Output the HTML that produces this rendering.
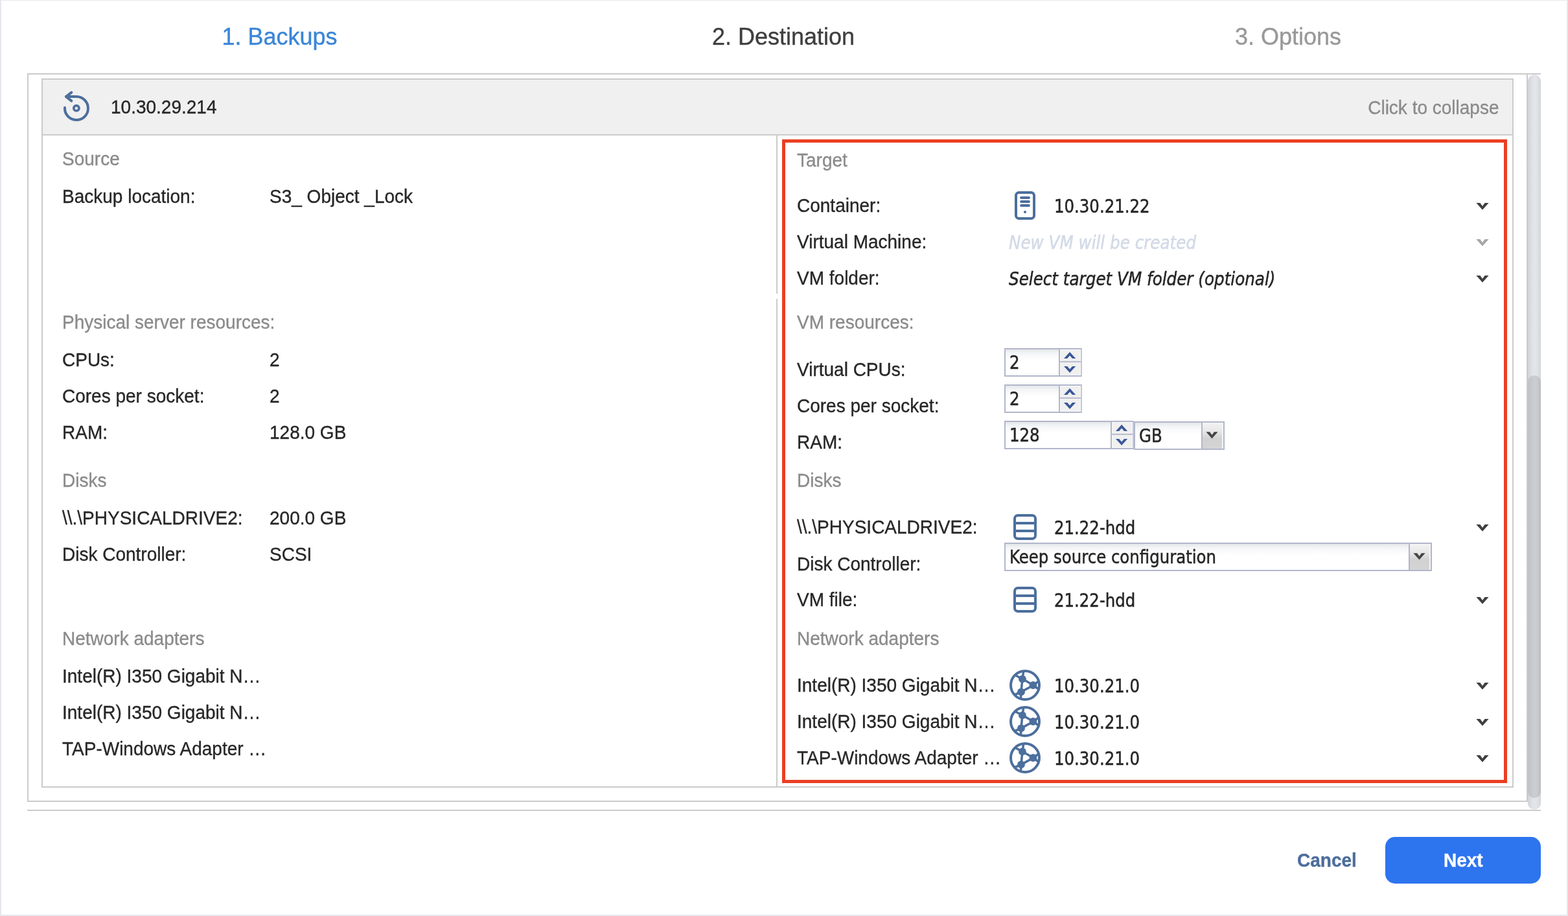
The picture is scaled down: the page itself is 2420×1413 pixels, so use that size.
<!DOCTYPE html>
<html lang="en"><head><meta charset="utf-8"><title>Recovery wizard - Destination</title>
<style>
*{box-sizing:border-box;margin:0;padding:0}
html,body{width:2420px;height:1413px;overflow:hidden;background:#fff}
body{position:relative;font-family:"Liberation Sans",Arial,Helvetica,sans-serif;font-size:28px;color:#272727}
#app{position:absolute;left:0;top:0;width:2420px;height:1413px;will-change:transform}
.abs{position:absolute}
.t{position:absolute;white-space:nowrap;line-height:32px;height:32px;transform-origin:0 0;transform:scaleY(1.03);-webkit-text-stroke:.35px currentColor}
.g{color:#8b8b8b}
.tv{position:absolute;white-space:nowrap;line-height:34px;height:34px;font-family:"DejaVu Sans",Verdana,Tahoma,sans-serif;font-size:28px;transform-origin:0 50%;transform:scaleX(.872);color:#262626;-webkit-text-stroke:.55px currentColor}
.tv.i{font-style:italic;transform:scaleX(.88)}
.title{position:absolute;top:35.8px;width:778px;text-align:center;font-size:36px;line-height:42px;white-space:nowrap;transform-origin:0 0;transform:scaleY(1.015);-webkit-text-stroke:.4px currentColor}
.line{position:absolute;background:#cbcbcb}
.fld{position:absolute;height:44px;border:2px solid #b2b6cb;background:linear-gradient(#e3e6e9 0,#f1f3f4 5px,#fbfbfc 12px,#fff 18px)}
.spin{position:absolute;top:0;right:0;bottom:0;width:34px;border-left:2px solid #b2b6cb;background:#f0f0f0;box-shadow:inset 0 0 0 1px #fafafa}
.spin i{position:absolute;left:0;right:0;top:18px;height:2px;background:#b9bdd0}
.trig{position:absolute;top:0;right:0;bottom:0;width:34px;border-left:2px solid #b2b6cb;background:linear-gradient(#f3f3f3 0,#e8e8e8 32%,#d1d1d1 62%,#d4d4d4 100%);box-shadow:inset -2px 1px 0 0 #f4f4f4}
svg{position:absolute;overflow:visible}
.btn{position:absolute;left:2138px;top:1291px;width:240px;height:72px;border-radius:15px;background:#2d74ef}
</style></head>
<body>
<div id="app">
<div class="abs" style="left:0;top:0;width:2420px;height:1413px;border:2px solid #e6e8ed;border-width:1px 2px 2px 2px"></div>
<div class="title" style="left:42.5px;color:#3b86d8">1. Backups</div>
<div class="title" style="left:820px;color:#3f3f3f">2. Destination</div>
<div class="title" style="left:1599px;color:#999">3. Options</div>
<div class="line" style="left:42px;top:113px;width:2336px;height:2px"></div>
<div class="line" style="left:42px;top:113px;width:2px;height:1124px"></div>
<div class="line" style="left:2356px;top:113px;width:2px;height:1124px"></div>
<div class="line" style="left:42px;top:1235px;width:2316px;height:2px"></div>
<div class="line" style="left:42px;top:1249px;width:2336px;height:2px"></div>
<div class="abs" style="left:64px;top:121px;width:2272px;height:1094px;border:2px solid #cbcbcb"></div>
<div class="abs" style="left:66px;top:123px;width:2268px;height:84px;background:#f0f0f0"></div>
<div class="line" style="left:66px;top:207px;width:2268px;height:2px"></div>
<div class="line" style="left:1198px;top:209px;width:2px;height:244px"></div>
<div class="line" style="left:1198px;top:461px;width:2px;height:752px"></div>
<div class="abs" style="left:1207px;top:215px;width:1119px;height:993px;border:5px solid #ea3f23"></div>
<div class="abs" style="left:2358px;top:115px;width:20px;height:1134px;border-radius:10px;background:linear-gradient(90deg,#d0d2d7 0,#dcdee3 25%,#e4e6ea 50%,#dfe1e6 75%,#d2d4d9 100%)"></div>
<div class="abs" style="left:2358px;top:578.5px;width:20px;height:652.5px;border-radius:10px;background:linear-gradient(90deg,#bec0c5 0,#c7c9cd 30%,#cdced2 55%,#c6c8cc 80%,#b9bbc0 100%)"></div>
<svg style="left:96px;top:140px" width="44" height="48" viewBox="0 0 44 48"><g fill="none" stroke="#4c6f9d" stroke-width="4" stroke-linecap="round" stroke-linejoin="round"><path d="M6 9.1H22A18 18 0 1 1 4 26"/><path d="M14.3 2.6L6 9.1L14.3 15.6"/><circle cx="21.9" cy="26.9" r="4.1" stroke-width="3.7"/></g></svg>
<div class="t" style="left:171px;top:149.1px">10.30.29.214</div>
<div class="t g" style="right:106.5px;top:149.6px">Click to collapse</div>
<div class="t g" style="left:96px;top:228.9px">Source</div>
<div class="t" style="left:96px;top:286.9px">Backup location:</div>
<div class="t" style="left:416px;top:286.9px">S3_ Object _Lock</div>
<div class="t g" style="left:96px;top:480.9px">Physical server resources:</div>
<div class="t" style="left:96px;top:539px">CPUs:</div>
<div class="t" style="left:416px;top:539px">2</div>
<div class="t" style="left:96px;top:595px">Cores per socket:</div>
<div class="t" style="left:416px;top:595px">2</div>
<div class="t" style="left:96px;top:651px">RAM:</div>
<div class="t" style="left:416px;top:651px">128.0 GB</div>
<div class="t g" style="left:96px;top:725px">Disks</div>
<div class="t" style="left:96px;top:783px">\\.\PHYSICALDRIVE2:</div>
<div class="t" style="left:416px;top:783px">200.0 GB</div>
<div class="t" style="left:96px;top:839px">Disk Controller:</div>
<div class="t" style="left:416px;top:839px">SCSI</div>
<div class="t g" style="left:96px;top:969px">Network adapters</div>
<div class="t" style="left:96px;top:1027px">Intel(R) I350 Gigabit N…</div>
<div class="t" style="left:96px;top:1083px">Intel(R) I350 Gigabit N…</div>
<div class="t" style="left:96px;top:1139px">TAP-Windows Adapter …</div>
<div class="t g" style="left:1230px;top:230.9px">Target</div>
<div class="t" style="left:1230px;top:301.1px">Container:</div>
<div class="t" style="left:1230px;top:357.1px">Virtual Machine:</div>
<div class="t" style="left:1230px;top:413.1px">VM folder:</div>
<div class="t g" style="left:1230px;top:481.1px">VM resources:</div>
<div class="t" style="left:1230px;top:554.1px">Virtual CPUs:</div>
<div class="t" style="left:1230px;top:610.2px">Cores per socket:</div>
<div class="t" style="left:1230px;top:666.2px">RAM:</div>
<div class="t g" style="left:1230px;top:725px">Disks</div>
<div class="t" style="left:1230px;top:797px">\\.\PHYSICALDRIVE2:</div>
<div class="t" style="left:1230px;top:854px">Disk Controller:</div>
<div class="t" style="left:1230px;top:909px">VM file:</div>
<div class="t g" style="left:1230px;top:969px">Network adapters</div>
<div class="t" style="left:1230px;top:1041px">Intel(R) I350 Gigabit N…</div>
<div class="t" style="left:1230px;top:1097px">Intel(R) I350 Gigabit N…</div>
<div class="t" style="left:1230px;top:1153px">TAP-Windows Adapter …</div>
<svg style="left:1564px;top:294px" width="36" height="46" viewBox="0 0 36 46"><rect x="4" y="3" width="28" height="40" rx="4.5" fill="none" stroke="#4c6f9d" stroke-width="4"/><path d="M12 11h12M12 17h12M12 23h12" fill="none" stroke="#4c6f9d" stroke-width="3.8" stroke-linecap="round"/><circle cx="18" cy="33" r="2.1" fill="#4c6f9d"/></svg>
<div class="tv" style="left:1627px;top:302px">10.30.21.22</div>
<svg style="left:2278px;top:313.1px" width="20" height="12" viewBox="0 0 20 12"><polygon points="0.4,0 6.4,0 10,5.1 13.6,0 19.6,0 10,10.8" fill="#3f3f3f"/></svg>
<div class="tv i" style="left:1557px;top:358px;color:#d2dae7">New VM will be created</div>
<svg style="left:2278px;top:369.1px" width="20" height="12" viewBox="0 0 20 12"><polygon points="0.4,0 6.4,0 10,5.1 13.6,0 19.6,0 10,10.8" fill="#a6a6a6"/></svg>
<div class="tv i" style="left:1557px;top:414px">Select target VM folder (optional)</div>
<svg style="left:2278px;top:425.1px" width="20" height="12" viewBox="0 0 20 12"><polygon points="0.4,0 6.4,0 10,5.1 13.6,0 19.6,0 10,10.8" fill="#3f3f3f"/></svg>
<div class="fld" style="left:1550px;top:537px;width:120px;border-right-color:#c2c6d8"><div class="spin"><i></i><svg style="left:5.8px;top:4px" width="19" height="10" viewBox="0 0 19 10"><polygon points="0,10 9.1,0 18.2,10 13,10 9.1,5.6 5.2,10" fill="#3a5799"/></svg><svg style="left:5.8px;top:25.8px" width="19" height="10" viewBox="0 0 19 10"><polygon points="0,0 5.2,0 9.1,4.4 13,0 18.2,0 9.1,10" fill="#3a5799"/></svg></div></div>
<div class="tv" style="left:1558px;top:543px">2</div>
<div class="fld" style="left:1550px;top:593px;width:120px;border-right-color:#c2c6d8"><div class="spin"><i></i><svg style="left:5.8px;top:4px" width="19" height="10" viewBox="0 0 19 10"><polygon points="0,10 9.1,0 18.2,10 13,10 9.1,5.6 5.2,10" fill="#3a5799"/></svg><svg style="left:5.8px;top:25.8px" width="19" height="10" viewBox="0 0 19 10"><polygon points="0,0 5.2,0 9.1,4.4 13,0 18.2,0 9.1,10" fill="#3a5799"/></svg></div></div>
<div class="tv" style="left:1558px;top:599px">2</div>
<div class="fld" style="left:1550px;top:649px;width:200px;border-right-color:#c2c6d8"><div class="spin"><i></i><svg style="left:5.8px;top:4px" width="19" height="10" viewBox="0 0 19 10"><polygon points="0,10 9.1,0 18.2,10 13,10 9.1,5.6 5.2,10" fill="#3a5799"/></svg><svg style="left:5.8px;top:25.8px" width="19" height="10" viewBox="0 0 19 10"><polygon points="0,0 5.2,0 9.1,4.4 13,0 18.2,0 9.1,10" fill="#3a5799"/></svg></div></div>
<div class="tv" style="left:1558px;top:655px">128</div>
<div class="fld" style="left:1750px;top:650px;width:140px"><div class="trig"><svg style="left:5.4px;top:13.6px" width="19" height="11" viewBox="0 0 20 11"><polygon points="0.4,0 6.4,0 10,5.1 13.6,0 19.6,0 10,10.8" fill="#444"/></svg></div></div>
<div class="tv" style="left:1758px;top:656px">GB</div>
<svg style="left:1562px;top:793px" width="40" height="40" viewBox="0 0 40 40"><g fill="none" stroke="#4c6f9d" stroke-width="4"><rect x="4" y="2" width="32" height="36" rx="5"/><path d="M4 14h32M4 26h32"/></g></svg>
<div class="tv" style="left:1627px;top:798px">21.22-hdd</div>
<svg style="left:2278px;top:809.1px" width="20" height="12" viewBox="0 0 20 12"><polygon points="0.4,0 6.4,0 10,5.1 13.6,0 19.6,0 10,10.8" fill="#3f3f3f"/></svg>
<div class="fld" style="left:1550px;top:837px;width:660px"><div class="trig"><svg style="left:5.4px;top:13.6px" width="19" height="11" viewBox="0 0 20 11"><polygon points="0.4,0 6.4,0 10,5.1 13.6,0 19.6,0 10,10.8" fill="#444"/></svg></div></div>
<div class="tv" style="left:1558px;top:843px">Keep source configuration</div>
<svg style="left:1562px;top:905px" width="40" height="40" viewBox="0 0 40 40"><g fill="none" stroke="#4c6f9d" stroke-width="4"><rect x="4" y="2" width="32" height="36" rx="5"/><path d="M4 14h32M4 26h32"/></g></svg>
<div class="tv" style="left:1627px;top:910px">21.22-hdd</div>
<svg style="left:2278px;top:921.1px" width="20" height="12" viewBox="0 0 20 12"><polygon points="0.4,0 6.4,0 10,5.1 13.6,0 19.6,0 10,10.8" fill="#3f3f3f"/></svg>
<svg style="left:1558px;top:1033px" width="48" height="48" viewBox="0 0 48 48"><g fill="none" stroke="#4c6f9d"><circle cx="24" cy="24" r="22" stroke-width="4"/><path d="M19.9 14.3L21.6 3M19.9 14.3L9 8.5M19.9 14.3L36.9 24L18 34.4ZM18 34.4L17.4 45.5M18 34.4L8.5 38.5M36.9 24L44 18.5M36.9 24L44 29.5" stroke-width="3.6" stroke-linejoin="round"/></g><g fill="#4c6f9d"><circle cx="19.9" cy="14.3" r="5.9"/><circle cx="36.4" cy="24" r="5.9"/><circle cx="18" cy="34.4" r="5.9"/></g></svg>
<div class="tv" style="left:1627px;top:1042px">10.30.21.0</div>
<svg style="left:2278px;top:1053.1px" width="20" height="12" viewBox="0 0 20 12"><polygon points="0.4,0 6.4,0 10,5.1 13.6,0 19.6,0 10,10.8" fill="#3f3f3f"/></svg>
<svg style="left:1558px;top:1089px" width="48" height="48" viewBox="0 0 48 48"><g fill="none" stroke="#4c6f9d"><circle cx="24" cy="24" r="22" stroke-width="4"/><path d="M19.9 14.3L21.6 3M19.9 14.3L9 8.5M19.9 14.3L36.9 24L18 34.4ZM18 34.4L17.4 45.5M18 34.4L8.5 38.5M36.9 24L44 18.5M36.9 24L44 29.5" stroke-width="3.6" stroke-linejoin="round"/></g><g fill="#4c6f9d"><circle cx="19.9" cy="14.3" r="5.9"/><circle cx="36.4" cy="24" r="5.9"/><circle cx="18" cy="34.4" r="5.9"/></g></svg>
<div class="tv" style="left:1627px;top:1098px">10.30.21.0</div>
<svg style="left:2278px;top:1109.1px" width="20" height="12" viewBox="0 0 20 12"><polygon points="0.4,0 6.4,0 10,5.1 13.6,0 19.6,0 10,10.8" fill="#3f3f3f"/></svg>
<svg style="left:1558px;top:1145px" width="48" height="48" viewBox="0 0 48 48"><g fill="none" stroke="#4c6f9d"><circle cx="24" cy="24" r="22" stroke-width="4"/><path d="M19.9 14.3L21.6 3M19.9 14.3L9 8.5M19.9 14.3L36.9 24L18 34.4ZM18 34.4L17.4 45.5M18 34.4L8.5 38.5M36.9 24L44 18.5M36.9 24L44 29.5" stroke-width="3.6" stroke-linejoin="round"/></g><g fill="#4c6f9d"><circle cx="19.9" cy="14.3" r="5.9"/><circle cx="36.4" cy="24" r="5.9"/><circle cx="18" cy="34.4" r="5.9"/></g></svg>
<div class="tv" style="left:1627px;top:1154px">10.30.21.0</div>
<svg style="left:2278px;top:1165.1px" width="20" height="12" viewBox="0 0 20 12"><polygon points="0.4,0 6.4,0 10,5.1 13.6,0 19.6,0 10,10.8" fill="#3f3f3f"/></svg>
<div class="t" style="left:2002px;top:1310.8px;font-weight:bold;color:#4c6d9b">Cancel</div>
<div class="btn"></div>
<div class="t" style="left:2228px;top:1310.8px;font-weight:bold;color:#fff">Next</div>
</div>
</body></html>
